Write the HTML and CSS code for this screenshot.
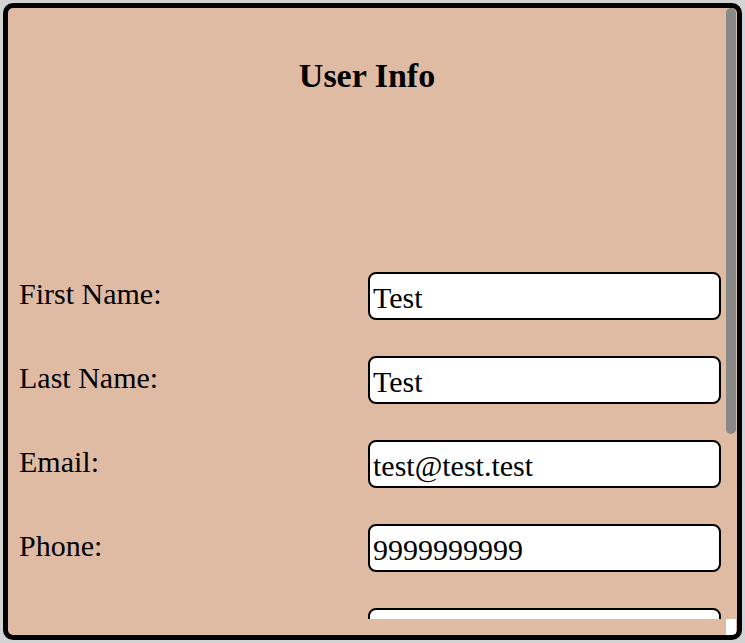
FILE: index.html
```html
<!DOCTYPE html>
<html lang="en">
<head>
<meta charset="utf-8">
<title>User Info</title>
<link rel="stylesheet" href="styles.css">
</head>
<body>
<div class="card">
  <div class="viewport">
    <div class="content">
      <h1 class="title">User Info</h1>
      <form class="form">
        <label class="label" for="first">First Name:</label>
        <input class="field" id="first" type="text" value="Test">
        <label class="label" for="last">Last Name:</label>
        <input class="field" id="last" type="text" value="Test">
        <label class="label" for="email">Email:</label>
        <input class="field" id="email" type="text" value="test@test.test">
        <label class="label" for="phone">Phone:</label>
        <input class="field" id="phone" type="text" value="9999999999">
        <label class="label" for="dob">Date of Birth:</label>
        <input class="field" id="dob" type="text" value="">
        <label class="label" for="address">Address:</label>
        <input class="field" id="address" type="text" value="">
      </form>
    </div>
  </div>
  <div class="vbar"><div class="thumb"></div></div>
  <div class="hbar"></div>
  <div class="corner"></div>
</div>
</body>
</html>
```

FILE: styles.css
```css
html, body {
  margin: 0;
  padding: 0;
  height: 100%;
}

body {
  background: #d3d3d3;
  padding: 3px;
  box-sizing: border-box;
  font-family: "Liberation Serif", "DejaVu Serif", serif;
  color: #000;
}

.card {
  box-sizing: border-box;
  height: 637px;
  border: 5px solid #000;
  border-radius: 10px;
  background: #dfbba4;
  overflow: hidden;
  display: grid;
  grid-template-columns: 1fr 11px;
  grid-template-rows: 1fr 16px;
}

.viewport {
  overflow: hidden;
  min-height: 0;
}

.vbar {
  padding-right: 1px;
}

.thumb {
  height: 426px;
  background: #888;
  border-radius: 5px;
}

.hbar {
  background: transparent;
}

.corner {
  background: #fff;
  margin-right: 1px;
}

.content {
  padding: 48px 5px 144px 11px;
}

.title {
  margin: 0 -5px 0 -11px;
  font-size: 34px;
  line-height: 40px;
  font-weight: bold;
  text-align: center;
}

.form {
  margin-top: 176px;
  display: grid;
  grid-template-columns: 1fr 353px;
  row-gap: 36px;
}

.label {
  font-size: 30px;
  line-height: 36px;
  margin-top: 4px;
}

.field {
  box-sizing: border-box;
  width: 353px;
  height: 48px;
  margin: 0;
  border: 2px solid #000;
  border-radius: 8px;
  background: #fff;
  padding: 3px 3px 0;
  font-family: "Liberation Serif", "DejaVu Serif", serif;
  font-size: 30px;
  color: #000;
  outline: none;
}
```
